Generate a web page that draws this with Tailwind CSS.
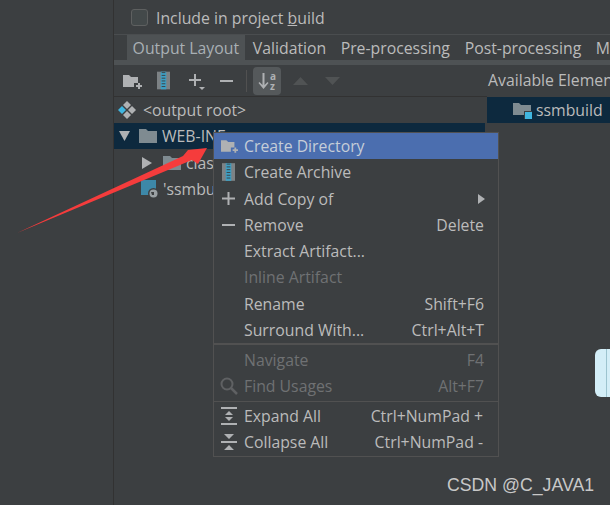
<!DOCTYPE html>
<html lang="en">
<head>
  <meta charset="UTF-8" />
  <title>Artifacts</title>
  <script src="https://cdn.jsdelivr.net/npm/@tailwindcss/browser@4"></script>
</head>
<body class="overflow-hidden bg-[#3c3f41]">
<div class="relative flex w-[610px] h-[505px] overflow-hidden bg-[#3c3f41] font-['Open_Sans',sans-serif] text-[15.8px] leading-[24px] text-[#bbbbbb]">

  <!-- left column -->
  <aside class="w-[114px] shrink-0 border-r border-[#323232]"></aside>

  <main class="flex-1 min-w-0 flex flex-col">
    <div class="h-[35px] shrink-0 flex items-center pl-[17px] pt-[1px] border-b border-[#4a4d4f]">
      <span class="w-[17px] h-[17px] rounded-[3px] border border-[#5e6060] bg-[#43494a] mr-[8px]"></span>
      <span>Include in project <u>b</u>uild</span>
    </div>

    <!-- tabs -->
    <div class="h-[30px] shrink-0 flex items-start pl-[13px] gap-[2px] border-b-[5px] border-[#4e5254] whitespace-nowrap">
      <div class="w-[118px] h-[25px] pt-[1px] bg-[#4e5254] text-[#a9b0b4] flex items-center justify-center">Output Layout</div>
      <div class="w-[86px] h-[25px] pt-[1px] bg-[#3c3f41] flex items-center justify-center">Validation</div>
      <div class="w-[122px] h-[25px] pt-[1px] flex items-center justify-center">Pre-processing</div>
      <div class="w-[130px] h-[25px] pt-[1px] flex items-center justify-center">Post-processing</div>
      <div class="pl-[6px] h-[25px] pt-[1px] flex items-center">M</div>
    </div>

    <!-- toolbar -->
    <div class="h-[32px] shrink-0 flex">
      <div class="w-[373px] shrink-0 relative flex items-center border-b border-[#323232]">
        <svg class="ml-[9px]" width="19" height="16" viewBox="0 0 19 16"><path d="M0 2h6l2 2h7v6h-4v4H0z" fill="#afb1b3"/><path d="M15 10h2v2h2v2h-2v2h-2v-2h-2v-2h2z" fill="#afb1b3"/></svg>
        <svg class="ml-[15px]" width="13" height="19" viewBox="0 0 14 19"><rect width="14" height="19" fill="#7d8285"/><rect x="4" width="6" height="19" fill="#3d9fc4"/><path d="M5 1h4M5 4h4M5 7h4M5 10h4M5 13h4M5 16h4" stroke="#3c3f41" stroke-width="1"/></svg>
        <svg class="ml-[18px]" width="18" height="22" viewBox="0 0 18 22"><path d="M6 3h2v5h5v2H8v5H6v-5H1V8h5z" fill="#afb1b3" transform="translate(0 1)"/><path d="M11 17h6l-3 3z" fill="#afb1b3"/></svg>
        <svg class="ml-[14px]" width="13" height="2" viewBox="0 0 13 2"><rect width="13" height="2" fill="#afb1b3"/></svg>
        <span class="ml-[13px] w-px h-[22px] bg-[#515151]"></span>
        <div class="ml-[6px] w-[28px] h-[28px] rounded-[4px] bg-[#55595b] flex items-center justify-center gap-[1px]">
          <svg width="11" height="18" viewBox="0 0 11 18"><path d="M4.500 1h2v12l3-3 1 1-5 6-5-6 1-1 3 3z" fill="#afb1b3"/></svg>
          <span class="block text-[10px] leading-[10px] font-bold text-[#afb1b3]">a<br>z</span>
        </div>
        <svg class="ml-[12px]" width="15" height="8" viewBox="0 0 15 8"><path d="M7.500 0l7.500 8H0z" fill="#505354"/></svg>
        <svg class="ml-[17px]" width="15" height="8" viewBox="0 0 15 8"><path d="M0 0h15L7.500 8z" fill="#505354"/></svg>
      </div>
      <div class="pl-[1px] leading-[30px] whitespace-nowrap">Available Elements</div>
    </div>

    <div class="flex-1 flex min-h-0">
      <!-- tree -->
      <div class="w-[371px] shrink-0">
        <div class="h-[26px] flex items-center pl-[4px]">
          <svg width="18" height="18" viewBox="0 0 18 18"><path d="M9 0l4 4-4 4-4-4z" fill="#afb1b3"/><path d="M9 10l4 4-4 4-4-4z" fill="#afb1b3"/><path d="M4 5l4 4-4 4-4-4z" fill="#40b6e0"/><path d="M14 5l4 4-4 4-4-4z" fill="#afb1b3"/></svg>
          <span class="ml-[7px]">&lt;output root&gt;</span>
        </div>
        <div class="h-[26px] flex items-center pl-[5px] bg-[#0d293e]">
          <svg width="11" height="10" viewBox="0 0 11 10"><path d="M0 0h11L5.500 10z" fill="#afb1b3"/></svg>
          <svg class="ml-[9px]" width="18" height="14" viewBox="0 0 18 14"><path d="M0 0h7l2 2h9v12H0z" fill="#7f8b91"/></svg>
          <span class="ml-[5px]">WEB-INF</span>
        </div>
        <div class="h-[27px] flex items-center pl-[28px]">
          <svg width="10" height="12" viewBox="0 0 10 12"><path d="M0 0l10 6-10 6z" fill="#afb1b3"/></svg>
          <svg class="ml-[11px]" width="18" height="14" viewBox="0 0 18 14"><path d="M0 0h7l2 2h9v12H0z" fill="#7f8b91"/></svg>
          <span class="ml-[5px]">classes</span>
        </div>
        <div class="h-[26px] flex items-center pl-[27px]">
          <svg width="18" height="19" viewBox="0 0 18 19"><rect width="15" height="15" fill="#3d88a8"/><circle cx="12.500" cy="13.500" r="5.500" fill="#3c3f41"/><circle cx="12.500" cy="13.500" r="4" fill="#9aa0a3"/><path d="M10 12h3v3h-2z" fill="#3c3f41"/></svg>
          <span class="ml-[4px]">'ssmbuild</span>
        </div>
      </div>
      <!-- available elements -->
      <div class="flex-1 ml-[2px]">
        <div class="h-[26px] flex items-center pl-[26px] bg-[#0d293e]">
          <svg width="19" height="17" viewBox="0 0 19 17"><path d="M0 1h6l2 2h10v10H0z" fill="#7f8b91"/><rect x="11" y="9" width="8" height="8" fill="#3c3f41"/><rect x="12" y="10" width="7" height="7" fill="#40b6e0"/></svg>
          <span class="ml-[4px]">ssmbuild</span>
        </div>
      </div>
    </div>
  </main>

  <!-- context menu -->
  <div class="absolute left-[213px] top-[132px] w-[286px] pb-[1px] border border-[#515151] bg-[#3c3f41] whitespace-nowrap">
    <div class="h-[26px] flex items-center bg-[#4b6eaf] pl-[7px] pr-[14px]">
      <svg class="w-[17px] h-[15px]" viewBox="0 0 19 16"><path d="M0 1h6l2 2h7v6h-4v5H0z" fill="#afb1b3"/><path d="M15 9h2v2h2v2h-2v2h-2v-2h-2v-2h2z" fill="#afb1b3"/></svg>
      <span class="ml-[6px] text-[#c5cdd8]">Create Directory</span>
    </div>
    <div class="h-[26px] flex items-center pl-[8px] pr-[14px]">
      <svg width="13" height="18" viewBox="0 0 14 19"><rect width="14" height="19" fill="#7d8285"/><rect x="4" width="6" height="19" fill="#3d9fc4"/><path d="M5 1h4M5 4h4M5 7h4M5 10h4M5 13h4M5 16h4" stroke="#3c3f41"/></svg>
      <span class="ml-[9px]">Create Archive</span>
    </div>
    <div class="h-[27px] flex items-center pl-[8px] pr-[14px]">
      <svg width="13" height="13" viewBox="0 0 13 13"><path d="M5.500 0h2v5.500H13v2H7.500V13h-2V7.500H0v-2h5.500z" fill="#afb1b3"/></svg>
      <span class="ml-[9px]">Add Copy of</span>
      <svg class="ml-auto mr-[-1px]" width="7" height="10" viewBox="0 0 7 10"><path d="M0 0l7 5-7 5z" fill="#afb1b3"/></svg>
    </div>
    <div class="h-[26px] flex items-center pl-[8px] pr-[14px]">
      <svg width="13" height="2" viewBox="0 0 13 2"><rect width="13" height="2" fill="#afb1b3"/></svg>
      <span class="ml-[9px]">Remove</span><span class="ml-auto">Delete</span>
    </div>
    <div class="h-[26px] flex items-center pl-[30px] pr-[14px]">Extract Artifact...</div>
    <div class="h-[26px] flex items-center pl-[30px] pr-[14px] text-[#6f7173]">Inline Artifact</div>
    <div class="h-[27px] flex items-center pl-[30px] pr-[14px]">Rename<span class="ml-auto">Shift+F6</span></div>
    <div class="h-[26px] flex items-center pl-[30px] pr-[14px]">Surround With...<span class="ml-auto">Ctrl+Alt+T</span></div>
    <div class="h-[4px] flex items-start"><div class="w-full h-[2px] bg-[#515151]"></div></div>
    <div class="h-[26px] flex items-center pl-[30px] pr-[14px] text-[#6f7173]">Navigate<span class="ml-auto">F4</span></div>
    <div class="h-[26px] flex items-center pl-[6px] pr-[14px] text-[#6f7173]">
      <svg width="18" height="18" viewBox="0 0 18 18"><circle cx="7" cy="7" r="5.500" fill="none" stroke="#5f6163" stroke-width="2"/><path d="M11 11l6 6" stroke="#5f6163" stroke-width="2.500"/></svg>
      <span class="ml-[6px]">Find Usages</span><span class="ml-auto">Alt+F7</span>
    </div>
    <div class="h-[4px] flex items-center"><div class="w-full h-px bg-[#515151]"></div></div>
    <div class="h-[26px] flex items-center pl-[7px] pr-[15px]">
      <svg width="16" height="18" viewBox="0 0 16 18"><path d="M0 0h16v2H0zM0 16h16v2H0zM8 4l4 4H4zM4 10h8l-4 4z" fill="#afb1b3"/></svg>
      <span class="ml-[7px]">Expand All</span><span class="ml-auto">Ctrl+NumPad +</span>
    </div>
    <div class="h-[26px] flex items-center pl-[7px] pr-[15px]">
      <svg width="16" height="18" viewBox="0 0 16 18"><path d="M0 8h16v2H0zM3 1h10L8 6zM8 12l5 5H3z" fill="#afb1b3"/></svg>
      <span class="ml-[7px]">Collapse All</span><span class="ml-auto">Ctrl+NumPad -</span>
    </div>
  </div>

  <!-- red annotation arrow -->
  <svg class="absolute left-0 top-0 pointer-events-none" width="610" height="505" viewBox="0 0 610 505">
    <path d="M17 233L183 156L188 150L207 148L198 164L192 160Z" fill="#f53c3c"/>
  </svg>

  <!-- clipped window on the right -->
  <div class="absolute left-[595px] top-[349px] w-[15px] h-[48px] rounded-l-[6px] bg-[#d3eef7] flex justify-end pr-[3px]"><span class="w-px bg-[#9cc4cf]"></span></div>

  <!-- watermark -->
  <div class="absolute left-[447px] top-[475px] font-['Liberation_Sans',sans-serif] text-[17.700px] leading-[20px] text-[#c8c8c8]">CSDN @C_JAVA1</div>
</div>
</body>
</html>
